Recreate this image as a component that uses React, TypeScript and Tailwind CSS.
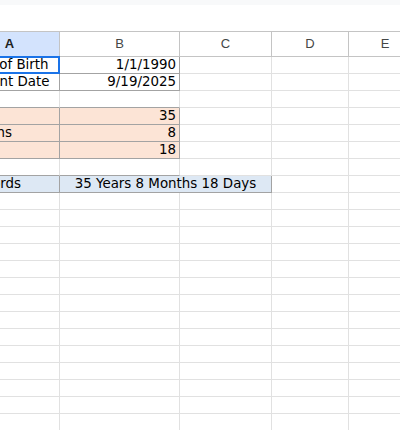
import type { ReactNode } from "react";

const LIGHT = "border-[#e1e1e1]";
const DARK = "border-[#a3a3a3]";

type CellProps = {
  children?: ReactNode;
  className?: string;
  span?: boolean;
};

function Cell({ children, className = "", span }: CellProps) {
  return (
    <div
      className={`relative flex h-[17px] items-center overflow-visible whitespace-nowrap border-b border-r px-[3px] text-[13.4px] leading-4 text-black ${
        span ? "col-span-2" : ""
      } ${className}`}
    >
      {children}
    </div>
  );
}

function Header({ label, active }: { label: string; active?: boolean }) {
  return (
    <div
      className={`flex h-6 items-center justify-center border-r border-[#c4c4c4] text-[13px] ${
        active ? "bg-[#d3e3fd] font-bold text-[#1f1f1f]" : "bg-white text-[#444746]"
      }`}
      style={{ fontFamily: '"Liberation Sans", Arial, sans-serif' }}
    >
      {label}
    </div>
  );
}

function EmptyRow({ bottomDark }: { bottomDark?: boolean }) {
  const b = bottomDark ? "border-b-[#a3a3a3]" : "";
  return (
    <>
      <Cell className={`${LIGHT} ${b}`} />
      <Cell className={`${LIGHT} ${b}`} />
      <Cell className={LIGHT} />
      <Cell className={LIGHT} />
      <Cell className={LIGHT} />
    </>
  );
}

export default function App() {
  const emptyRows = Array.from({ length: 16 });

  return (
    <main
      className="h-[430px] w-[400px] overflow-hidden bg-white"
      style={{ fontFamily: '"DejaVu Sans", Verdana, sans-serif' }}
    >
      <div className="h-[5px] bg-[#f8f9fa]" />
      <div className="h-[26px]" />
      <div className="ml-[-40px] grid w-[462px] grid-cols-[100px_120px_92px_77px_73px] border-t border-[#c4c4c4]">
        <Header label="A" active />
        <Header label="B" />
        <Header label="C" />
        <Header label="D" />
        <Header label="E" />
        <div className="col-span-5 h-px bg-[#c4c4c4]" />

        {/* row 1 */}
        <Cell className={DARK}>
          Date of Birth
          <div className="pointer-events-none absolute -top-px -right-px -bottom-px -left-px border-2 border-[#1a73e8]" />
        </Cell>
        <Cell className={`${DARK} justify-end`}>1/1/1990</Cell>
        <Cell className={LIGHT} />
        <Cell className={LIGHT} />
        <Cell className={LIGHT} />

        {/* row 2 */}
        <Cell className={DARK}>Current Date</Cell>
        <Cell className={`${DARK} justify-end`}>9/19/2025</Cell>
        <Cell className={LIGHT} />
        <Cell className={LIGHT} />
        <Cell className={LIGHT} />

        <EmptyRow bottomDark />

        {/* rows 4-6 */}
        {[
          ["Years", "35"],
          ["Months", "8"],
          ["Days", "18"],
        ].map(([label, value]) => (
          <div key={label} className="contents">
            <Cell className={`${DARK} bg-[#fce4d6]`}>{label}</Cell>
            <Cell className={`${DARK} justify-end bg-[#fce4d6]`}>{value}</Cell>
            <Cell className={LIGHT} />
            <Cell className={LIGHT} />
            <Cell className={LIGHT} />
          </div>
        ))}

        <EmptyRow bottomDark />

        {/* row 8 */}
        <Cell className={`${DARK} bg-[#dde8f4]`}>In Words</Cell>
        <Cell span className={`${DARK} justify-center bg-[#dde8f4]`}>
          35 Years 8 Months 18 Days
        </Cell>
        <Cell className={LIGHT} />
        <Cell className={LIGHT} />

        {emptyRows.map((_, i) => (
          <div key={i} className="contents">
            <EmptyRow />
          </div>
        ))}
      </div>
    </main>
  );
}
